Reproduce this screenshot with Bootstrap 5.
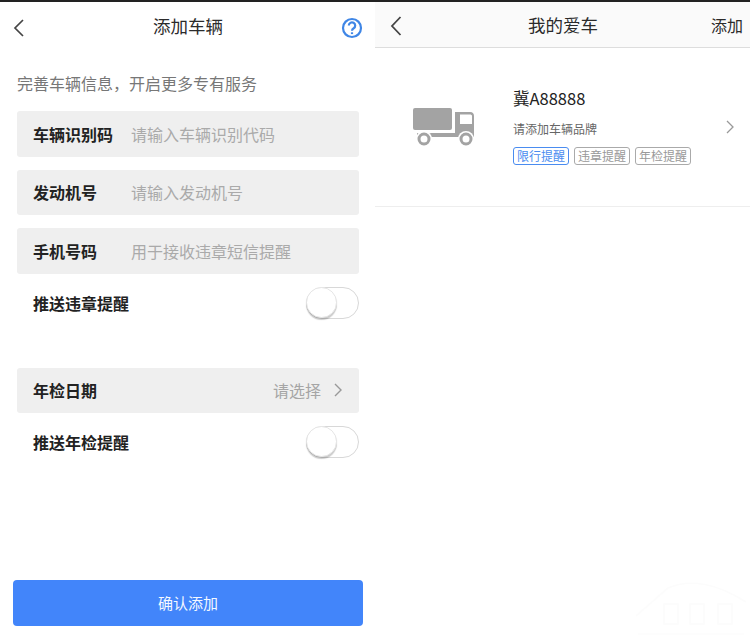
<!DOCTYPE html>
<html lang="zh-CN">
<head>
<meta charset="utf-8">
<title>添加车辆</title>
<link rel="stylesheet" href="https://cdn.jsdelivr.net/npm/bootstrap@5.3.0/dist/css/bootstrap.min.css">
<style>
html,body{height:642px;overflow:hidden}
body{background:#fff;font-family:"Noto Sans CJK SC","Liberation Sans",sans-serif;color:#222}
.shot{width:750px;height:642px;position:relative;border-top:2px solid #222}
.pane{width:375px;height:640px}
.head-l{height:46px;padding:2px 12px 0 13px}
.head-r{height:46px;padding:0 7px 0 15px;background:#fafafa;border-bottom:1px solid #ddd}
.head-title{font-size:17.5px;line-height:24px;color:#2b2b2b}
.slot{width:36px}
.slot-wide{width:43px;font-size:16px;line-height:24px;color:#2b2b2b}
.tip{margin:23px 0 16px 17px;font-size:16px;line-height:24px;color:#777}
.field{height:45.5px;margin:0 16px 13px 17px;padding:0 16px;background:#efefef;border-radius:3px;font-size:16px}
.field-label{width:98px;font-weight:700;color:#222;flex:none}
.hint{color:#aaa}
.hint-d{color:#a5a5a5}
.push{height:32px;margin:13px 16px 0 33px;font-size:16px;font-weight:700;color:#222}
.tog{width:53px;height:32px;border:1px solid #d8d8d8;border-radius:16px;background:#fff;position:relative}
.tog::after{content:"";position:absolute;left:-1px;top:-1px;width:31px;height:31px;border-radius:50%;background:#fff;border:1px solid #e6e6e6;box-shadow:0 2px 1px rgba(0,0,0,.2)}
.gap-block{height:49px}
.confirm{display:block;width:350px;height:46px;margin:0 0 0 13px;padding:0;background:#4285fa;border:0;border-radius:4px;color:#f4f8ff;font-size:15px}
.confirm:hover{background:#4285fa;color:#f4f8ff}
.car{height:159px;border-bottom:1px solid #eee;padding:0 15px 2px 38px}
.truck{width:62px;height:40px;margin:2px 38px 0 0;flex:none}
.car-next{margin-top:2px}
.plate{font-size:16.5px;line-height:22px;color:#222}
.plate-sub{font-size:12px;line-height:16px;color:#666;margin-top:12px}
.tags{margin-top:10px}
.tagx{font-size:12px;line-height:16px;padding:0 3px;border:1px solid #aaa;border-radius:3px;color:#999;margin-right:5px}
.tagx-on{border-color:#4a8cf0;color:#4a8cf0}
.mark-w{position:absolute;right:0;bottom:2px;width:116px;height:60px;pointer-events:none}
</style>
</head>
<body>
<div class="shot d-flex">
  <div class="pane d-flex flex-column">
    <div class="head-l d-flex align-items-center justify-content-between">
      <div class="slot"><svg width="12" height="20" viewBox="0 0 12 20" fill="none" stroke="#444" stroke-width="1.7"><path d="M10 2 2 10l8 8"/></svg></div>
      <div class="head-title">添加车辆</div>
      <div class="slot text-end"><svg width="22" height="22" viewBox="0 0 22 22" fill="none" stroke="#3f86e6" stroke-width="2.2"><circle cx="11" cy="11" r="9"/><path d="M7.8 8.6a3.2 3.2 0 1 1 4.9 2.7c-1.1.7-1.7 1.2-1.7 2.5"/><path d="M11 15.3v1.8"/></svg></div>
    </div>
    <div class="tip">完善车辆信息，开启更多专有服务</div>
    <div class="field d-flex align-items-center"><span class="field-label">车辆识别码</span><span class="hint">请输入车辆识别代码</span></div>
    <div class="field d-flex align-items-center"><span class="field-label">发动机号</span><span class="hint">请输入发动机号</span></div>
    <div class="field d-flex align-items-center mb-0"><span class="field-label">手机号码</span><span class="hint">用于接收违章短信提醒</span></div>
    <div class="push d-flex align-items-center justify-content-between"><span>推送违章提醒</span><span class="tog"></span></div>
    <div class="gap-block"></div>
    <div class="field d-flex align-items-center justify-content-between mb-0">
      <span class="field-label">年检日期</span>
      <span class="d-flex align-items-center gap-2"><span class="hint-d me-1">请选择</span><svg width="10" height="16" viewBox="0 0 10 16" fill="none" stroke="#999" stroke-width="1.4"><path d="m2 2 6 6-6 6"/></svg></span>
    </div>
    <div class="push d-flex align-items-center justify-content-between"><span>推送年检提醒</span><span class="tog"></span></div>
    <div class="mt-auto pb-3"><button type="button" class="btn confirm">确认添加</button></div>
  </div>
  <div class="pane d-flex flex-column">
    <div class="head-r d-flex align-items-center justify-content-between">
      <div class="slot"><svg width="12" height="22" viewBox="0 0 12 22" fill="none" stroke="#444" stroke-width="1.8"><path d="M10.5 2 2 11l8.500 9"/></svg></div>
      <div class="head-title">我的爱车</div>
      <div class="slot-wide text-end">添加</div>
    </div>
    <div class="car d-flex align-items-center">
      <svg class="truck" viewBox="0 0 62 40">
        <rect x="0" y="1" width="39" height="22" rx="2" fill="#a3a3a3"/>
        <path fill="#a3a3a3" fill-rule="evenodd" d="M42 5h15c3 0 4 2 4 4v21H2v-4h40zM47 7.500v9.500h12V9c0-1-1-1.500-2-1.500z"/>
        <rect x="1" y="26" width="3" height="4" fill="#fff"/>
        <circle cx="11" cy="32" r="8" fill="#fff"/>
        <circle cx="53" cy="32" r="8" fill="#fff"/>
        <circle cx="11" cy="32" r="5" fill="#fff" stroke="#a3a3a3" stroke-width="3"/>
        <circle cx="53" cy="32" r="5" fill="#fff" stroke="#a3a3a3" stroke-width="3"/>
      </svg>
      <div class="flex-grow-1">
        <div class="plate">冀A88888</div>
        <div class="plate-sub">请添加车辆品牌</div>
        <div class="tags d-flex"><span class="tagx tagx-on">限行提醒</span><span class="tagx">违章提醒</span><span class="tagx">年检提醒</span></div>
      </div>
      <svg class="car-next" width="10" height="16" viewBox="0 0 10 16" fill="none" stroke="#999" stroke-width="1.3"><path d="m2 2 6 6-6 6"/></svg>
    </div>
  </div>
  <svg class="mark-w" viewBox="0 0 116 60" fill="none" stroke="#fcfcfc" stroke-width="1.5"><path d="M2 36 34 8c22-10 50-4 78 14"/><path d="M30 24h14v20H30zM56 24h14v20H56zM84 24h14v20H84z"/><path d="M4 54h106"/></svg>
</div>
<script src="https://cdn.jsdelivr.net/npm/bootstrap@5.3.0/dist/js/bootstrap.bundle.min.js"></script>
</body>
</html>
